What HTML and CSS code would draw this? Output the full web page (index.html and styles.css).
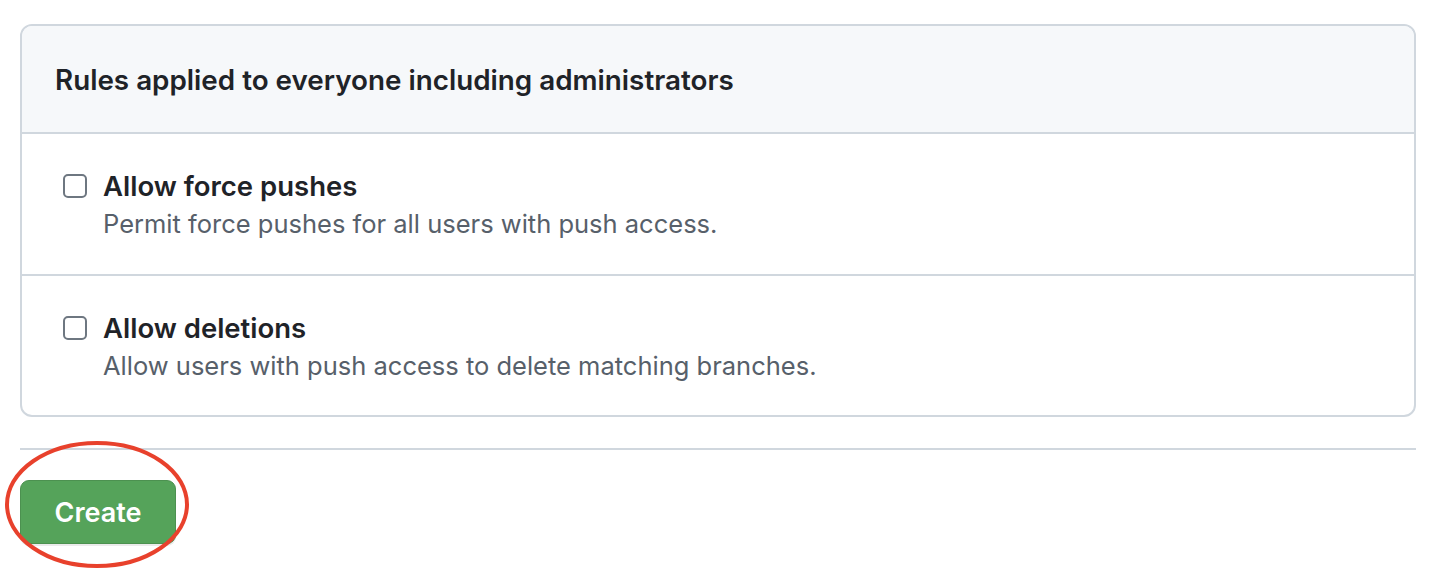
FILE: index.html
```html
<!DOCTYPE html>
<html>
<head>
<meta charset="utf-8">
<link rel="stylesheet" href="styles.css">
</head>
<body>
<div class="page">
  <div class="box">
    <div class="box-header">Rules applied to everyone including administrators</div>
    <div class="row">
      <span class="check"></span>
      <div class="row-text">
        <div class="row-title">Allow force pushes</div>
        <div class="row-desc">Permit force pushes for all users with push access.</div>
      </div>
    </div>
    <div class="row">
      <span class="check"></span>
      <div class="row-text">
        <div class="row-title">Allow deletions</div>
        <div class="row-desc">Allow users with push access to delete matching branches.</div>
      </div>
    </div>
  </div>
  <hr class="divider">
  <div class="actions">
    <button class="btn-create">Create</button>
    <svg class="annot" width="200" height="140" viewBox="0 0 200 140"><ellipse cx="97" cy="64.5" rx="90" ry="61.5" fill="none" stroke="#e8412c" stroke-width="4"/></svg>
  </div>
</div>
</body>
</html>
```
FILE: styles.css
```css
html, body { margin: 0; padding: 0; background: #fff; }
body { font-family: Inter, "Noto Sans", sans-serif; color: #1f2328; }
.page { padding: 24px 30px 0 20px; min-height: 582px; box-sizing: border-box; }
.box { border: 2px solid #d0d7de; border-radius: 12px; overflow: hidden; }
.box-header { background: #f6f8fa; height: 108px; border-bottom: 2px solid #d0d7de; display: flex; align-items: center; padding: 2px 0 0 33px; box-sizing: border-box; font-size: 27.8px; font-weight: 600; }
.row { display: flex; align-items: flex-start; height: 140px; padding: 40px 0 0 41px; box-sizing: border-box; }
.row + .row { border-top: 2px solid #d0d7de; height: 141px; }
.check { width: 24px; height: 24px; box-sizing: border-box; border: 2px solid #6e7781; border-radius: 5px; flex: none; margin-right: 16px; background: #fff; }
.row-title { font-size: 27.5px; font-weight: 600; line-height: 28px; margin-top: -2px; }
.row-desc { font-size: 25.5px; color: #57606a; line-height: 32px; margin-top: 8px; }
.divider { border: 0; border-top: 2px solid #d0d7de; margin: 31px 0 0 0; }
.actions { position: relative; padding-top: 30px; }
.btn-create { font-family: Inter, "Noto Sans", sans-serif; width: 156px; height: 64px; background: #55a35a; color: #fff; font-size: 27px; font-weight: 600; border: 1px solid #4c9150; border-radius: 9px; box-shadow: 0 2px 0 rgba(0,0,0,0.08); padding: 0; }
.annot { position: absolute; left: -20px; top: -10px; }
```
